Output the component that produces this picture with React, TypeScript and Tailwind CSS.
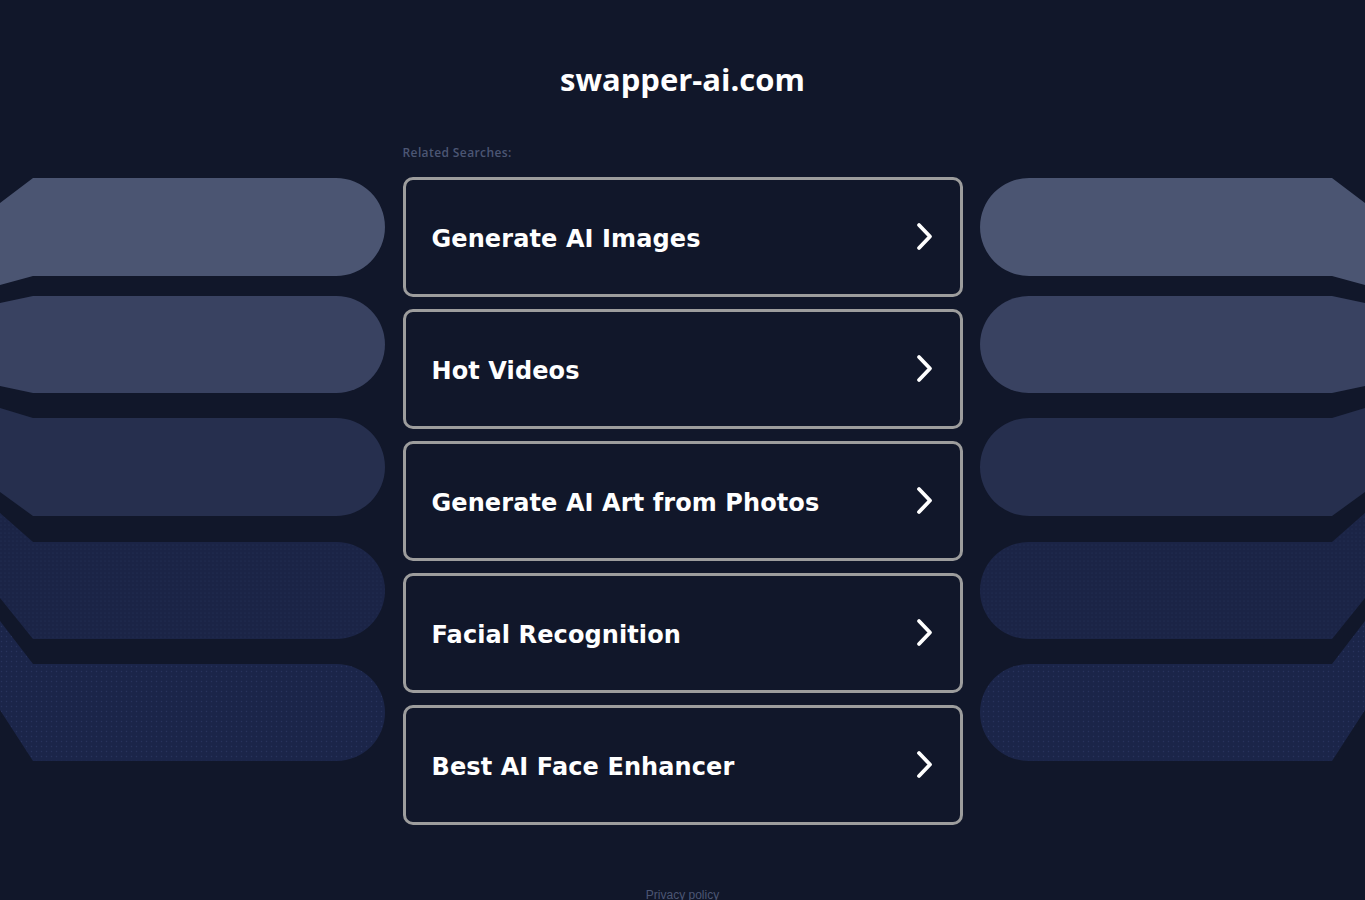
const searches = [
  "Generate AI Images",
  "Hot Videos",
  "Generate AI Art from Photos",
  "Facial Recognition",
  "Best AI Face Enhancer",
];

// fan of pills beside the list: [top at x=0, bottom at x=0, top, bottom, fill]
const bands: [number, number, number, number, string][] = [
  [203, 285, 178, 276, "#4b5572"],
  [303, 386, 296, 393, "#394261"],
  [408, 492, 418, 516, "#262f4e"],
  [513, 598, 542, 639, "url(#dotsA)"],
  [621, 710, 664, 761, "url(#dotsB)"],
];

function Fan({ flip }: { flip?: boolean }) {
  return (
    <svg
      width="385"
      height="780"
      viewBox="0 0 385 780"
      className={flip ? "shrink-0 -scale-x-100" : "shrink-0"}
    >
      <defs>
        <pattern id={flip ? "dotsA2" : "dotsA"} width="4" height="4" patternUnits="userSpaceOnUse">
          <rect width="4" height="4" fill="#1b2446" />
          <circle cx="1" cy="1" r="0.6" fill="#263058" />
        </pattern>
        <pattern id={flip ? "dotsB2" : "dotsB"} width="5" height="5" patternUnits="userSpaceOnUse">
          <rect width="5" height="5" fill="#1b2549" />
          <circle cx="1.5" cy="1.5" r="0.7" fill="#28335d" />
        </pattern>
      </defs>
      {bands.map(([a, b, t, btm, fill], i) => {
        const r = (btm - t) / 2;
        const f = flip ? fill.replace(")", "2)") : fill;
        return (
          <path
            key={i}
            d={`M0 ${a} L33 ${t} L${385 - r} ${t} A${r} ${r} 0 0 1 ${385 - r} ${btm} L33 ${btm} L0 ${b} Z`}
            fill={f}
          />
        );
      })}
    </svg>
  );
}

function Chevron() {
  return (
    <svg width="20" height="30" viewBox="0 0 20 30" fill="none">
      <polyline
        points="4,3 15,14.5 4,26"
        stroke="white"
        strokeWidth="3.8"
        strokeLinecap="round"
        strokeLinejoin="round"
      />
    </svg>
  );
}

export default function App() {
  return (
    <div className="min-h-screen bg-[#11172a] flex justify-between overflow-hidden">
      <Fan />

      <div className="w-[560px] shrink-0 flex flex-col pt-[61px]">
        <h1
          className="text-center text-[31px] leading-[36px] font-bold text-white"
          style={{ fontFamily: "'Open Sans', 'Noto Sans', sans-serif" }}
        >
          swapper-ai.com
        </h1>

        <p
          className="mt-[48px] text-[12px] leading-[16px] font-semibold tracking-[0.4px] text-[#4c5674]"
          style={{ fontFamily: "'Open Sans', 'Noto Sans', sans-serif" }}
        >
          Related Searches:
        </p>

        <div className="mt-[16px] flex flex-col gap-[12px]">
          {searches.map((s) => (
            <a
              key={s}
              href="#"
              className="h-[120px] flex items-center justify-between border-[3px] border-[#9d9d9d] rounded-[10px] pl-[26px] pr-[25px]"
            >
              <span
                className="text-white text-[24px] font-bold pt-[3px] tracking-[0.1px]"
                style={{ fontFamily: "'DejaVu Sans', Verdana, sans-serif" }}
              >
                {s}
              </span>
              <Chevron />
            </a>
          ))}
        </div>

        <p
          className="mt-[62px] text-center text-[12px] leading-[16px] text-[#4c5674]"
          style={{ fontFamily: "'Liberation Sans', Arial, sans-serif" }}
        >
          Privacy policy
        </p>
      </div>

      <Fan flip />
    </div>
  );
}
